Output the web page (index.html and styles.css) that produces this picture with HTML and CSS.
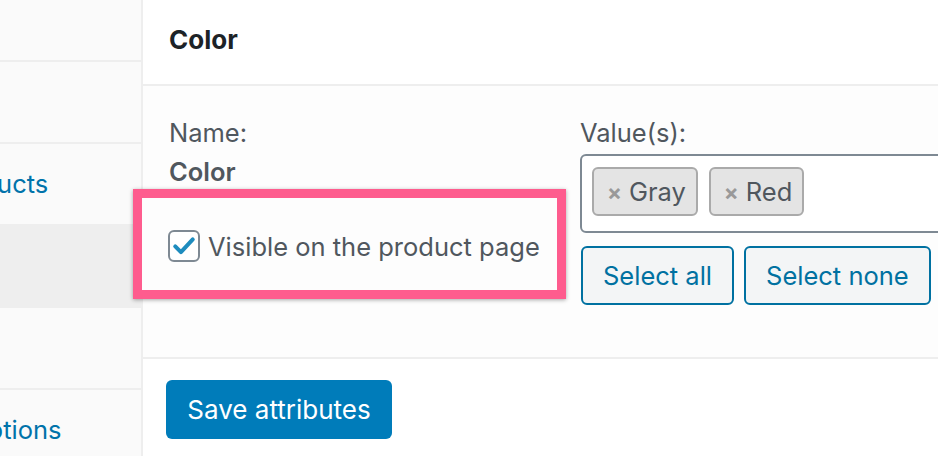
FILE: index.html
```html
<!DOCTYPE html>
<html lang="en">
<head>
<meta charset="utf-8">
<title>Product attributes</title>
<link rel="stylesheet" href="styles.css">
</head>
<body>
<div class="page">
  <nav class="sidebar">
    <ul class="tabs">
      <li class="tab"><a href="#">Inventory</a></li>
      <li class="tab"><a href="#">Shipping</a></li>
      <li class="tab"><a href="#">Linked Products</a></li>
      <li class="tab active"><a href="#">Attributes</a></li>
      <li class="tab"><a href="#">Advanced</a></li>
      <li class="tab"><a href="#">Get more options</a></li>
    </ul>
  </nav>
  <main class="main">
    <div class="attr-header"><h3 class="attr-title">Color</h3></div>
    <div class="attr-body">
      <div class="col-name">
        <div class="label">Name:</div>
        <div class="name-value">Color</div>
        <div class="highlight">
          <label class="check-label">
            <span class="checkbox">
              <svg viewBox="0 0 32 32" width="28" height="28"><path d="M6 16.5 L12.5 23 L26 8.5" fill="none" stroke="#1e8cbe" stroke-width="4.6" stroke-linecap="round" stroke-linejoin="round"/></svg>
            </span>
            <span>Visible on the product page</span>
          </label>
        </div>
      </div>
      <div class="col-values">
        <div class="label">Value(s):</div>
        <div class="select-box">
          <span class="tag"><span class="tag-x">×</span>Gray</span>
          <span class="tag"><span class="tag-x">×</span>Red</span>
        </div>
        <div class="btn-row">
          <button class="btn-secondary">Select all</button>
          <button class="btn-secondary">Select none</button>
        </div>
      </div>
    </div>
    <div class="attr-footer">
      <button class="btn-primary">Save attributes</button>
    </div>
  </main>
</div>
</body>
</html>
```

FILE: styles.css
```css
html, body {
  margin: 0;
  padding: 0;
  width: 938px;
  height: 456px;
  overflow: hidden;
  background: #fff;
}

body {
  font-family: Inter, "Noto Sans", "Liberation Sans", sans-serif;
  font-size: 25.5px;
  color: #50575e;
}

.page {
  display: flex;
  height: 456px;
}

.sidebar {
  flex: none;
  width: 141px;
  background: #fafafa;
  border-right: 2px solid #eeeeee;
  overflow: hidden;
}

.tabs {
  list-style: none;
  margin: -20px 0 0 -146px;
  padding: 0;
  width: 287px;
}

.tab {
  height: 80px;
  border-bottom: 2px solid #eeeeee;
  line-height: 80px;
  white-space: nowrap;
}

.tab a {
  color: #0073aa;
  text-decoration: none;
}

.tab.active {
  background: #eeeeee;
}

.main {
  flex: 1;
  display: flex;
  flex-direction: column;
  min-width: 0;
}

.attr-header {
  height: 84px;
  border-bottom: 2px solid #eeeeee;
  background: #fff;
  padding-left: 26px;
  display: flex;
  align-items: center;
}

.attr-title {
  margin: 0 0 6px;
  font-size: 26px;
  font-weight: 700;
  color: #1d2327;
}

.attr-body {
  height: 243px;
  padding: 28px 0 0 26px;
  background: #fdfdfd;
  border-bottom: 2px solid #eeeeee;
  display: flex;
}

.col-name {
  flex: none;
  width: 411px;
}

.label {
  line-height: 38px;
}

.name-value {
  line-height: 40px;
  font-weight: 600;
}

.highlight {
  margin: -3px 0 0 -36px;
  width: 389px;
  height: 92px;
  border: 9px solid #fe5c8e;
  box-shadow: 0 1px 4px rgba(0, 0, 0, 0.35);
  background: #fdfdfd;
  display: flex;
  align-items: center;
  padding-left: 26px;
}

.check-label {
  display: flex;
  align-items: center;
  gap: 8px;
  margin-top: 4px;
  white-space: nowrap;
}

.checkbox {
  width: 28px;
  height: 28px;
  border: 2px solid #7e8993;
  border-radius: 6px;
  background: #fff;
  display: flex;
  align-items: center;
  justify-content: center;
}

.col-values {
  flex: none;
  width: 420px;
}

.select-box {
  margin-top: 2px;
  height: 79px;
  box-sizing: border-box;
  border: 2px solid #7e8993;
  border-radius: 6px;
  background: #fff;
  display: flex;
  align-items: flex-start;
  gap: 11px;
  padding: 11px 0 0 10px;
}

.tag {
  height: 49px;
  box-sizing: border-box;
  border: 2px solid #aaaaaa;
  border-radius: 6px;
  background: #e4e4e4;
  color: #50575e;
  display: flex;
  align-items: center;
  padding: 0 10px 0 13px;
}

.tag-x {
  color: #999999;
  font-weight: 700;
  font-size: 22px;
  margin-right: 7px;
}

.btn-row {
  display: flex;
  gap: 10px;
  margin-top: 13px;
  margin-left: 1px;
}

.btn-secondary {
  height: 59px;
  padding: 0 20px;
  font-family: inherit;
  font-size: 25.5px;
  color: #0071a1;
  background: #f3f5f6;
  border: 2px solid #0071a1;
  border-radius: 6px;
}

.attr-footer {
  flex: 1;
  background: #fff;
  padding: 21px 0 0 23px;
}

.btn-primary {
  height: 59px;
  width: 226px;
  font-family: inherit;
  font-size: 26px;
  color: #fff;
  background: #007cba;
  border: none;
  border-radius: 6px;
}
```
